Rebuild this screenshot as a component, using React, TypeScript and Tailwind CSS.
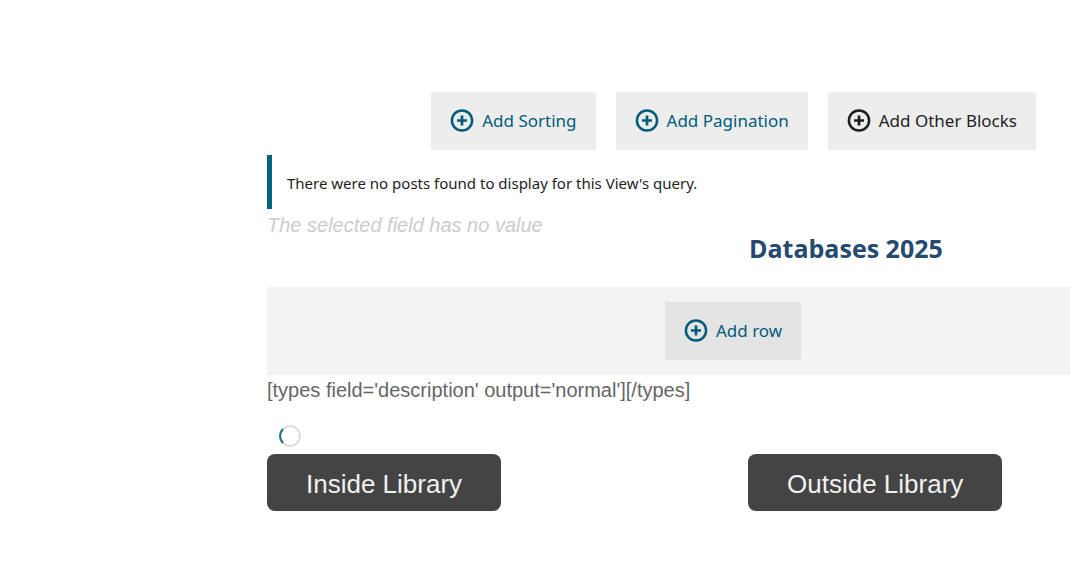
import type { ReactNode } from "react";

interface AddButtonProps {
  label: string;
  className?: string;
}

const PlusIcon = () => (
  <svg className="size-6 shrink-0" viewBox="0 0 24 24" fill="none" aria-hidden="true">
    <circle cx="12" cy="11.5" r="10.1" stroke="currentColor" strokeWidth="2.5" />
    <path d="M12 6.5v10M7 11.5h10" stroke="currentColor" strokeWidth="2.7" />
  </svg>
);

const AddButton = ({ label, className = "bg-[#ededed] text-[#005c7a]" }: AddButtonProps) => (
  <button
    type="button"
    className={`flex h-[58px] items-center gap-2 rounded-xs px-[19px] font-['Noto_Sans','Open_Sans',sans-serif] text-[17px] whitespace-nowrap ${className}`}
  >
    <PlusIcon />
    {label}
  </button>
);

const LibraryLink = ({ children }: { children: ReactNode }) => (
  <a
    href="#"
    className="inline-flex h-[57px] items-center rounded-lg bg-[#444] px-[39px] pt-[3px] text-[26px] whitespace-nowrap text-[#f1f1f1]"
  >
    {children}
  </a>
);

const Spinner = () => (
  <svg className="size-6" viewBox="0 0 24 24" fill="none" role="img" aria-label="Loading">
    <circle cx="12" cy="12" r="10" stroke="#ddd" strokeWidth="2" />
    <path d="M5 19A10 10 0 0 1 5 5" stroke="#1f7488" strokeWidth="2" />
  </svg>
);

const App = () => {
  return (
    <main className="ml-[267px] pt-[92px] font-['Liberation_Sans',Arial,sans-serif]">
      <div className="flex justify-end gap-5 pr-[34px]">
        <AddButton label="Add Sorting" />
        <AddButton label="Add Pagination" />
        <AddButton label="Add Other Blocks" className="bg-[#ededed] text-[#1e1e1e]" />
      </div>

      <p className="mt-[5px] flex h-[54px] items-center border-l-5 border-[#00647f] pt-[3px] pl-[15px] font-['Noto_Sans','Open_Sans',sans-serif] text-[15px] text-[#1e1e1e]">
        There were no posts found to display for this View's query.
      </p>

      <div className="grid h-[78px] grid-cols-[59.9%_1fr]">
        <p className="pt-1 text-xl leading-6 text-[#ccc] italic">The selected field has no value</p>
        <h2 className="pt-[23px] pl-px font-['Open_Sans',sans-serif] text-[25px] leading-8 font-bold text-[#254a70]">
          Databases 2025
        </h2>
      </div>

      <div className="flex h-[88px] items-center bg-[#f3f3f3] pl-[398px]">
        <AddButton label="Add row" className="bg-[#e5e4e4] text-[#005c7a]" />
      </div>

      <p className="pt-[3px] text-xl leading-6 text-[#666]">[types field='description' output='normal'][/types]</p>

      <div className="mt-[22px] pl-[11px]">
        <Spinner />
      </div>
      <div className="mt-[6px] grid grid-cols-[59.9%_1fr]">
        <div><LibraryLink>Inside Library</LibraryLink></div>
        <div><LibraryLink>Outside Library</LibraryLink></div>
      </div>
    </main>
  );
};

export default App;
